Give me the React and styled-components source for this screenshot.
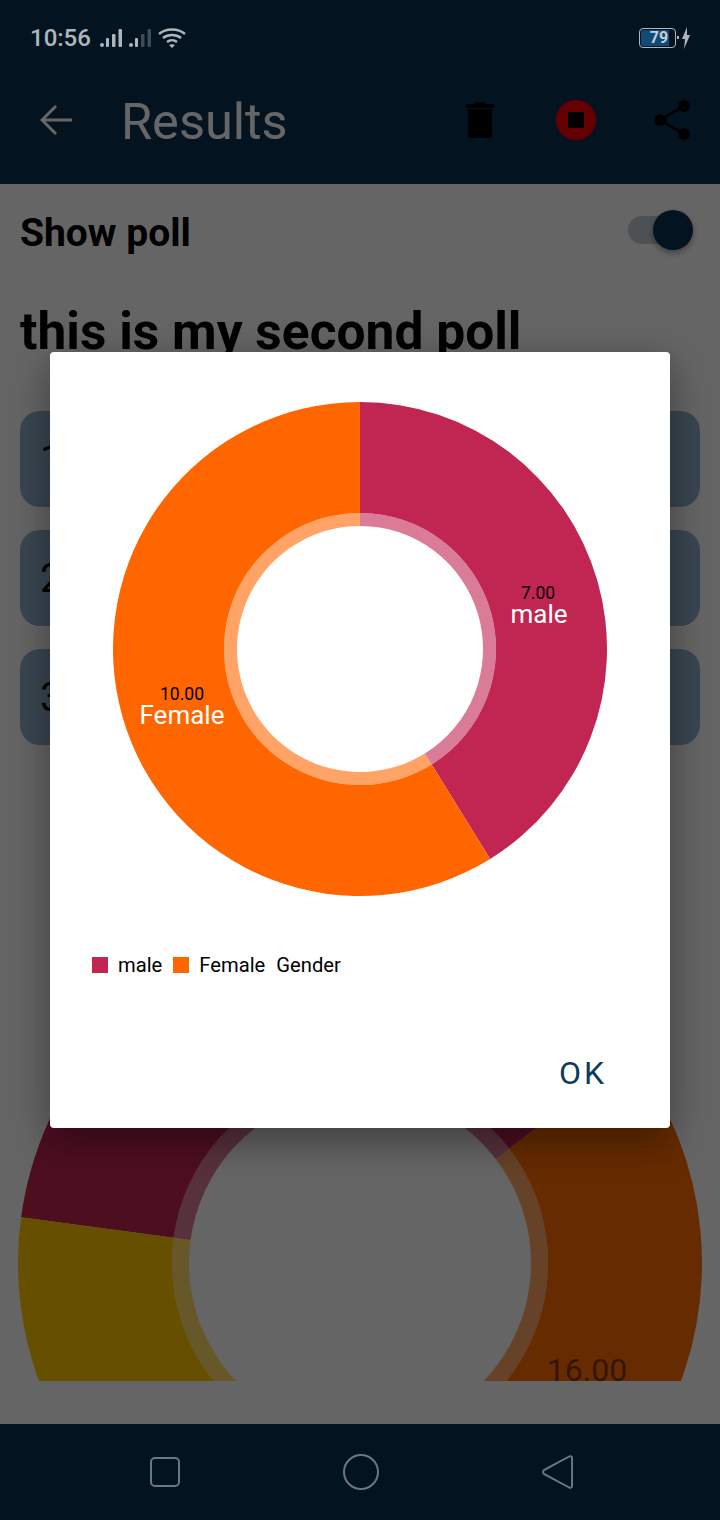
import React from 'react';
import styled, { createGlobalStyle } from 'styled-components';

const GlobalStyle = createGlobalStyle`
  html, body { margin: 0; padding: 0; background: #fff; }
  * { box-sizing: border-box; }
  body { font-family: Roboto, "Liberation Sans", sans-serif; }
`;

const Screen = styled.div`
  position: relative;
  width: 720px;
  height: 1520px;
  display: flex;
  flex-direction: column;
  overflow: hidden;
  background: #fffcff;
`;

const Header = styled.header`
  height: 184px;
  background: #0a3050;
  padding: 72px 0 16px;
  display: flex;
  align-items: center;
  flex-shrink: 0;
`;

const BackButton = styled.button`
  border: 0;
  background: none;
  padding: 0;
  width: 54px;
  margin-left: 29px;
  display: flex;
  justify-content: center;
  align-items: center;
`;

const ActionButton = styled.button`
  border: 0;
  background: none;
  padding: 0;
  width: 96px;
  display: flex;
  justify-content: center;
  align-items: center;
`;

const Title = styled.h1`
  margin: 4px 0 0 38px;
  flex: 1;
  color: #fff;
  font-size: 50.5px;
  font-weight: 400;
  line-height: 56px;
`;

const Body = styled.main`
  flex: 1;
  display: flex;
  flex-direction: column;
  padding: 0 20px;
  min-height: 0;
`;

const ToggleRow = styled.div`
  height: 98px;
  display: flex;
  align-items: center;
  justify-content: space-between;
`;

const ToggleLabel = styled.span`
  font-size: 39px;
  font-weight: 700;
  color: #000;
`;

const Switch = styled.div`
  position: relative;
  width: 58px;
  height: 28px;
  margin: 0 14px 6px 0;
  border-radius: 14px;
  background: #c4cad0;
`;

const Knob = styled.div`
  position: absolute;
  right: -7px;
  top: -6px;
  width: 40px;
  height: 40px;
  border-radius: 50%;
  background: #0a3050;
  box-shadow: 0 3px 6px rgba(0, 0, 0, 0.35);
`;

const Question = styled.h2`
  margin: 22px 0 51px;
  font-size: 51.5px;
  line-height: 56px;
  font-weight: 700;
  color: #000;
  white-space: nowrap;
`;

const Options = styled.div`
  display: flex;
  flex-direction: column;
  gap: 23px;
`;

const Option = styled.div`
  height: 96px;
  border-radius: 20px;
  background: #8fb0cb;
  padding-left: 20px;
  display: flex;
  align-items: center;
  font-size: 40px;
  color: #000;
`;

const ChartClip = styled.div`
  flex: 1;
  min-height: 0;
  margin: 0 -20px 43px;
  overflow: hidden;
`;

const ChartSvg = styled.svg`
  display: block;
  margin-top: 176px;
`;

const NavBar = styled.nav`
  height: 96px;
  flex-shrink: 0;
  background: #031320;
  padding-left: 2px;
  display: flex;
  align-items: center;
  justify-content: center;
  gap: 163px;
  position: relative;
  z-index: 3;
`;

const StatusBar = styled.div`
  position: absolute;
  z-index: 3;
  top: 0;
  left: 0;
  right: 0;
  height: 76px;
  padding: 0 30px;
  display: flex;
  align-items: center;
  justify-content: space-between;
`;

const StatusLeft = styled.div`
  display: flex;
  align-items: center;
  gap: 7px;
`;

const Clock = styled.span`
  font-size: 24px;
  font-weight: 500;
  color: #aeb6bc;
  margin-right: 2px;
`;

const BatteryWrap = styled.div`
  display: flex;
  align-items: center;
  gap: 1px;
`;

const Battery = styled.div`
  width: 37px;
  height: 20px;
  border: 1px solid #aeb6bc;
  border-radius: 4px;
  padding: 1px;
`;

const BatteryFill = styled.div`
  width: 28px;
  height: 16px;
  border-radius: 2px 0 0 2px;
  background: #114a75;
  color: #c3ced6;
  font-size: 16px;
  font-weight: 700;
  line-height: 16px;
  text-align: center;
  padding-left: 8px;
  white-space: nowrap;
`;

const Scrim = styled.div`
  position: absolute;
  inset: 0;
  z-index: 1;
  background: rgba(0, 0, 0, 0.6);
`;

const Dialog = styled.div`
  position: absolute;
  z-index: 2;
  left: 50px;
  top: 352px;
  width: 620px;
  height: 776px;
  background: #fff;
  border-radius: 4px;
  box-shadow: 0 12px 40px rgba(0, 0, 0, 0.4);
  display: flex;
  flex-direction: column;
`;

const DonutSvg = styled.svg`
  display: block;
  margin: 50px auto 0;
`;

const Legend = styled.div`
  margin-top: 51px;
  padding-left: 42px;
  display: flex;
  align-items: center;
  height: 36px;
  font-size: 20.2px;
  color: #000;
`;

const Swatch = styled.span`
  width: 16px;
  height: 16px;
  background: ${(p) => p.$color};
  margin-right: 10px;
`;

const LegendText = styled.span`
  margin-right: ${(p) => p.$mr}px;
`;

const DialogActions = styled.div`
  margin-top: auto;
  padding: 0 63px 36px 0;
  display: flex;
  justify-content: flex-end;
`;

const OkButton = styled.button`
  border: 0;
  background: none;
  padding: 0;
  font-family: inherit;
  font-size: 32px;
  line-height: 38px;
  letter-spacing: 3px;
  color: #0e3a5c;
`;

const polar = (cx, cy, r, deg) => {
  const a = ((deg - 90) * Math.PI) / 180;
  return [cx + r * Math.cos(a), cy + r * Math.sin(a)];
};

const sector = (cx, cy, r0, r1, from, to) => {
  const [x0, y0] = polar(cx, cy, r1, from);
  const [x1, y1] = polar(cx, cy, r1, to);
  const [x2, y2] = polar(cx, cy, r0, to);
  const [x3, y3] = polar(cx, cy, r0, from);
  const large = to - from > 180 ? 1 : 0;
  return `M${x0} ${y0}A${r1} ${r1} 0 ${large} 1 ${x1} ${y1}L${x2} ${y2}A${r0} ${r0} 0 ${large} 0 ${x3} ${y3}Z`;
};

const Donut = ({ size, outer, ring, hole, slices }) => {
  const c = size / 2;
  return slices.map((s) => (
    <React.Fragment key={s.color}>
      <path d={sector(c, c, ring, outer, s.from, s.to)} fill={s.color} />
      <path d={sector(c, c, hole, ring, s.from, s.to)} fill={s.color} fillOpacity="0.6" />
    </React.Fragment>
  ));
};

const Bars = ({ dim }) => (
  <svg width="22" height="18" viewBox="0 0 22 18" fill="#aeb6bc">
    <circle cx="2" cy="16" r="2" />
    <rect x="6" y="9" width="3" height="9" rx="1" />
    <rect x="12" y="5" width="3.500" height="13" rx="1" opacity={dim ? 0.35 : 1} />
    <rect x="18.500" y="0" width="3.500" height="18" rx="1" opacity={dim ? 0.35 : 1} />
  </svg>
);

export default function App() {
  return (
    <Screen>
      <GlobalStyle />
      <Header>
        <BackButton>
          <svg width="32" height="32" viewBox="0 0 32 32" fill="none" stroke="#fff" strokeWidth="3">
            <path d="M32 16H3M16 2L2 16l14 14" />
          </svg>
        </BackButton>
        <Title>Results</Title>
        <ActionButton>
          <svg width="28" height="36" viewBox="0 0 28 36" fill="#000">
            <path d="M0 2h9l1-2h8l1 2h9v4H0zM2 7h24v26a3 3 0 0 1-3 3H5a3 3 0 0 1-3-3z" />
          </svg>
        </ActionButton>
        <ActionButton>
          <svg width="40" height="40" viewBox="0 0 40 40">
            <circle cx="20" cy="20" r="20" fill="#ff0000" />
            <rect x="12" y="12" width="16" height="16" fill="#000" />
          </svg>
        </ActionButton>
        <ActionButton>
          <svg width="36" height="40" viewBox="0 0 36 40" fill="#000">
            <circle cx="30" cy="6" r="6" />
            <circle cx="6" cy="20" r="6" />
            <circle cx="30" cy="34" r="6" />
            <path d="M30 6L6 20l24 14" fill="none" stroke="#000" strokeWidth="3" />
          </svg>
        </ActionButton>
      </Header>
      <Body>
        <ToggleRow>
          <ToggleLabel>Show poll</ToggleLabel>
          <Switch><Knob /></Switch>
        </ToggleRow>
        <Question>this is my second poll</Question>
        <Options>
          <Option>1</Option>
          <Option>2</Option>
          <Option>3</Option>
        </Options>
        <ChartClip>
          <ChartSvg width="720" height="684" viewBox="-18 0 720 684">
            <Donut
              size={684}
              outer={342}
              ring={188}
              hole={171}
              slices={[
                { color: '#c12552', from: 277.7, to: 412.6 },
                { color: '#ff6d00', from: 52.6, to: 180 },
                { color: '#ffc800', from: 180, to: 277.7 },
              ]}
            />
            <text x="569" y="460" fontSize="32" fill="#000" fillOpacity="0.5" textAnchor="middle" fontFamily="Roboto">16.00</text>
          </ChartSvg>
        </ChartClip>
      </Body>
      <NavBar>
        <svg width="30" height="30" viewBox="0 0 30 30" fill="none" stroke="#6b7883" strokeWidth="2">
          <rect x="1" y="1" width="28" height="28" rx="4" />
        </svg>
        <svg width="36" height="36" viewBox="0 0 36 36" fill="none" stroke="#6b7883" strokeWidth="2">
          <circle cx="18" cy="18" r="17" />
        </svg>
        <svg width="31" height="36" viewBox="0 0 32 36" fill="none" stroke="#6b7883" strokeWidth="2">
          <path d="M28 2a2 2 0 0 1 3 1v30a2 2 0 0 1-3 1L2 20a3 3 0 0 1 0-4z" />
        </svg>
      </NavBar>
      <Scrim />
      <StatusBar>
        <StatusLeft>
          <Clock>10:56</Clock>
          <Bars />
          <Bars dim />
          <svg width="28" height="20" viewBox="0 0 28 20" fill="none" stroke="#aeb6bc" strokeWidth="2.4">
            <path d="M1 6c7-6 19-6 26 0M5 10c5-4 13-4 18 0M9 14c3-2.500 7-2.500 10 0" />
            <path d="M14 20l-3-3c2-1 4-1 6 0z" fill="#aeb6bc" stroke="none" />
          </svg>
        </StatusLeft>
        <BatteryWrap>
          <Battery><BatteryFill>79</BatteryFill></Battery>
          <svg width="13" height="22" viewBox="0 0 13 22" fill="#aeb6bc">
            <rect x="0" y="9" width="2" height="3" />
            <path d="M10 0L5 12h3l-1 10 6-14h-3z" />
          </svg>
        </BatteryWrap>
      </StatusBar>
      <Dialog>
        <DonutSvg width="494" height="494" viewBox="0 0 494 494">
          <Donut
            size={494}
            outer={247}
            ring={136}
            hole={123}
            slices={[
              { color: '#c12552', from: 0, to: 148.2 },
              { color: '#ff6600', from: 148.2, to: 360 },
            ]}
          />
          <g fontFamily="Roboto" textAnchor="middle">
            <text x="425" y="197" fontSize="17.5" fill="#000">7.00</text>
            <text x="426" y="221" fontSize="26" fill="#fff">male</text>
            <text x="69" y="298" fontSize="17.5" fill="#000">10.00</text>
            <text x="69" y="322" fontSize="26" fill="#fff">Female</text>
          </g>
        </DonutSvg>
        <Legend>
          <Swatch $color="#c12552" />
          <LegendText $mr={11}>male</LegendText>
          <Swatch $color="#ff6600" />
          <LegendText $mr={11}>Female</LegendText>
          <LegendText>Gender</LegendText>
        </Legend>
        <DialogActions>
          <OkButton>OK</OkButton>
        </DialogActions>
      </Dialog>
    </Screen>
  );
}
